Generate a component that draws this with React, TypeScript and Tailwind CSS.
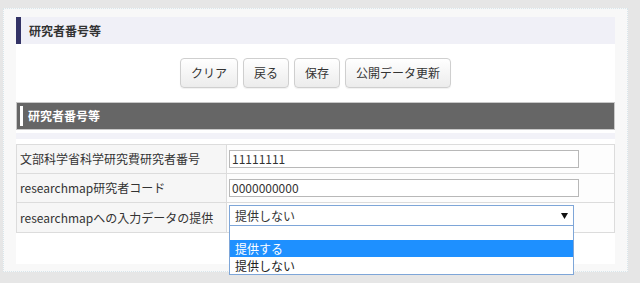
import React from "react";

const font = { fontFamily: '"Noto Sans CJK JP", "Noto Sans", sans-serif' };

function Btn({ label }: { label: string }) {
  return (
    <button className="h-[30px] px-[10px] rounded-[4px] border border-[#cfcfcf] bg-gradient-to-b from-[#ffffff] to-[#ececec] text-[12px] text-[#333] shadow-[0_1px_1px_rgba(0,0,0,0.06)]">
      {label}
    </button>
  );
}

function Row({ label, children, last }: { label: string; children: React.ReactNode; last?: boolean }) {
  return (
    <div className={`flex h-[29px] ${last ? "" : "border-b border-[#dcdcdc]"}`}>
      <div className="w-[210px] shrink-0 bg-[#f6f6f6] border-r border-[#dcdcdc] flex items-center pl-[3px] text-[12px] text-[#333]">
        {label}
      </div>
      <div className="flex-1 bg-[#fdfdfd] flex items-center pl-[2px]">{children}</div>
    </div>
  );
}

export default function App() {
  return (
    <div className="w-[640px] h-[283px] bg-[#e6e6e6] pt-[8px] pl-[3px]" style={font}>
      <div className="w-[625px] h-[264px] bg-[#f8f8f8] border border-dotted border-[#d8e6ec] pl-[12px] pt-[8px]">
        <div className="w-[599px] bg-white h-[247px]">
          <div className="h-[27px] bg-[#f0f0f7] border-l-[5px] border-[#333366] flex items-center pl-[8px] text-[12px] font-bold text-[#333]">
            研究者番号等
          </div>
          <div className="flex justify-center gap-[5px] pt-[14px]">
            <Btn label="クリア" />
            <Btn label="戻る" />
            <Btn label="保存" />
            <Btn label="公開データ更新" />
          </div>
          <div className="mt-[14px] h-[28px] bg-[#666] border border-[#c8c8c8] flex items-center pl-[3px]">
            <div className="w-[3px] h-[20px] bg-white" />
            <span className="ml-[5px] text-[12px] font-bold text-white">研究者番号等</span>
          </div>
          <div className="mt-[3px] h-[6px] bg-[#f2f2f8]" />
          <div className="relative mt-[5px] border border-[#dcdcdc]">
            <Row label="文部科学省科学研究費研究者番号">
              <div className="w-[350px] h-[18px] border border-[#b8b8b8] bg-white flex items-center pl-[2px] text-[12px] text-[#333]">
                11111111
              </div>
            </Row>
            <Row label="researchmap研究者コード">
              <div className="w-[350px] h-[18px] border border-[#b8b8b8] bg-white flex items-center pl-[2px] text-[12px] text-[#333]">
                0000000000
              </div>
            </Row>
            <Row label="researchmapへの入力データの提供" last>
              <div className="relative -mt-[4px] w-[345px] h-[21px] border border-[#7ea6d8] bg-white flex items-center justify-between pl-[5px] pr-[5px] text-[12px] text-[#333]">
                <span>提供しない</span>
                <svg width="7" height="6" viewBox="0 0 7 6">
                  <path d="M0 0 H7 L3.5 6 Z" fill="#111" />
                </svg>
                <div className="absolute left-[-1px] top-[19px] w-[345px] border border-[#7ea6d8] bg-white text-[12px] text-[#222]">
                  <div className="h-[14px]" />
                  <div className="h-[17px] bg-[#1e90ff] text-white flex items-center pl-[5px]">提供する</div>
                  <div className="h-[17px] flex items-center pl-[5px]">提供しない</div>
                </div>
              </div>
            </Row>
          </div>
        </div>
      </div>
    </div>
  );
}
